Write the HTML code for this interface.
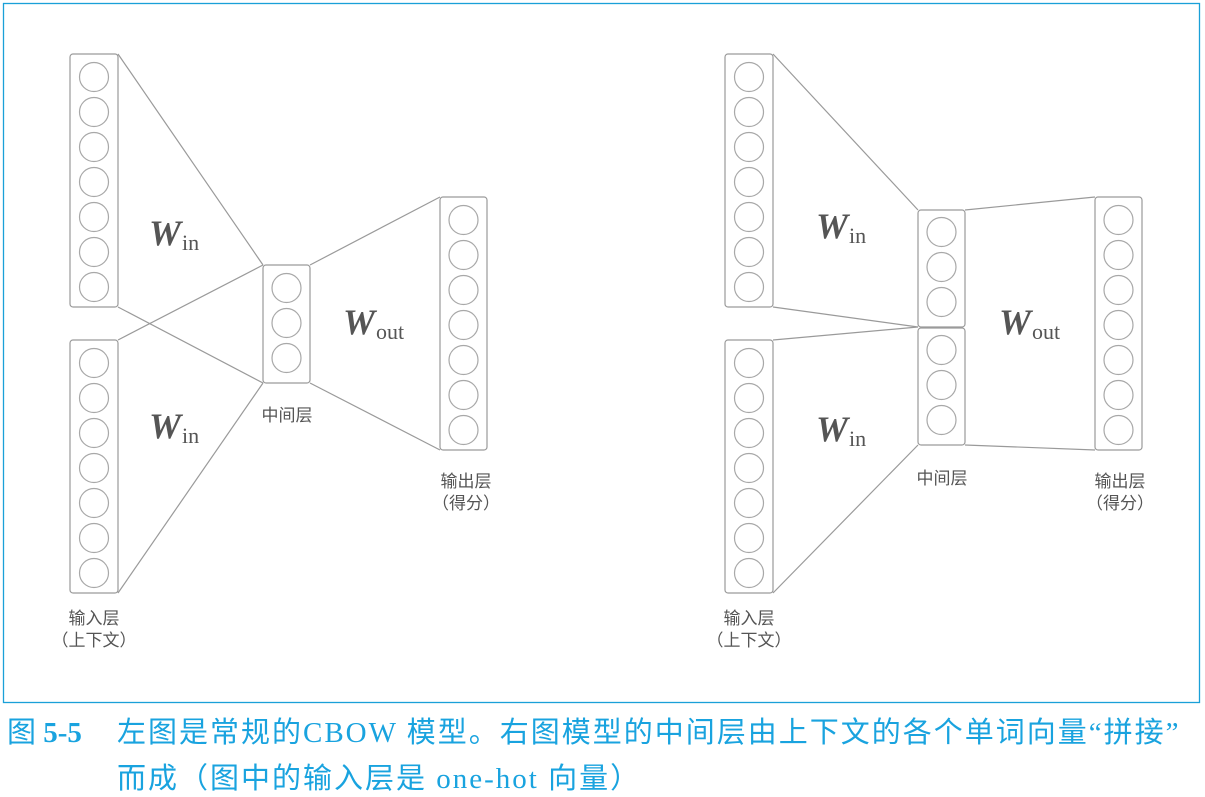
<!DOCTYPE html>
<html><head><meta charset="utf-8"><style>
html,body{margin:0;padding:0;background:#fff;width:1205px;height:791px;overflow:hidden}
.cap{position:absolute;color:#19a3df;font-family:"Liberation Serif","Noto Sans CJK SC",serif;font-size:29px;white-space:nowrap;letter-spacing:2px}
</style></head><body>
<svg width="1205" height="791" style="position:absolute;left:0;top:0" xmlns="http://www.w3.org/2000/svg">
<rect x="3.5" y="3.5" width="1196" height="699" fill="none" stroke="#1aa0d8" stroke-width="1.3"/>
<g fill="none" stroke="#9a9a9a" stroke-width="1.2">
<rect x="70" y="54" width="48" height="253" rx="3"/>
<rect x="70" y="340" width="48" height="253" rx="3"/>
<rect x="263" y="265" width="47" height="118" rx="3"/>
<rect x="440" y="197" width="47" height="253" rx="3"/>
<line x1="118" y1="54" x2="263" y2="265"/>
<line x1="118" y1="307" x2="263" y2="383"/>
<line x1="118" y1="340" x2="263" y2="265"/>
<line x1="118" y1="593" x2="263" y2="383"/>
<line x1="310" y1="265" x2="440" y2="197"/>
<line x1="310" y1="383" x2="440" y2="450"/>
<rect x="725" y="54" width="48" height="253" rx="3"/>
<rect x="725" y="340" width="48" height="253" rx="3"/>
<rect x="918" y="210" width="47" height="117" rx="3"/>
<rect x="918" y="328" width="47" height="117" rx="3"/>
<rect x="1095" y="197" width="47" height="253" rx="3"/>
<line x1="773" y1="54" x2="918" y2="210"/>
<line x1="773" y1="307" x2="918" y2="327"/>
<line x1="773" y1="340" x2="918" y2="327"/>
<line x1="773" y1="593" x2="918" y2="445"/>
<line x1="965" y1="210" x2="1095" y2="197"/>
<line x1="965" y1="445" x2="1095" y2="450"/>
</g>
<g fill="none" stroke="#a8a8a8" stroke-width="1.2">
<circle cx="94" cy="77" r="14.5"/><circle cx="94" cy="112" r="14.5"/><circle cx="94" cy="147" r="14.5"/><circle cx="94" cy="182" r="14.5"/><circle cx="94" cy="217" r="14.5"/><circle cx="94" cy="252" r="14.5"/><circle cx="94" cy="287" r="14.5"/>
<circle cx="94" cy="363" r="14.5"/><circle cx="94" cy="398" r="14.5"/><circle cx="94" cy="433" r="14.5"/><circle cx="94" cy="468" r="14.5"/><circle cx="94" cy="503" r="14.5"/><circle cx="94" cy="538" r="14.5"/><circle cx="94" cy="573" r="14.5"/>
<circle cx="286.5" cy="288" r="14.5"/><circle cx="286.5" cy="323" r="14.5"/><circle cx="286.5" cy="358" r="14.5"/>
<circle cx="463.5" cy="220" r="14.5"/><circle cx="463.5" cy="255" r="14.5"/><circle cx="463.5" cy="290" r="14.5"/><circle cx="463.5" cy="325" r="14.5"/><circle cx="463.5" cy="360" r="14.5"/><circle cx="463.5" cy="395" r="14.5"/><circle cx="463.5" cy="430" r="14.5"/>
<circle cx="749" cy="77" r="14.5"/><circle cx="749" cy="112" r="14.5"/><circle cx="749" cy="147" r="14.5"/><circle cx="749" cy="182" r="14.5"/><circle cx="749" cy="217" r="14.5"/><circle cx="749" cy="252" r="14.5"/><circle cx="749" cy="287" r="14.5"/>
<circle cx="749" cy="363" r="14.5"/><circle cx="749" cy="398" r="14.5"/><circle cx="749" cy="433" r="14.5"/><circle cx="749" cy="468" r="14.5"/><circle cx="749" cy="503" r="14.5"/><circle cx="749" cy="538" r="14.5"/><circle cx="749" cy="573" r="14.5"/>
<circle cx="941.5" cy="232" r="14.5"/><circle cx="941.5" cy="267" r="14.5"/><circle cx="941.5" cy="302" r="14.5"/>
<circle cx="941.5" cy="350" r="14.5"/><circle cx="941.5" cy="385" r="14.5"/><circle cx="941.5" cy="420" r="14.5"/>
<circle cx="1118.5" cy="220" r="14.5"/><circle cx="1118.5" cy="255" r="14.5"/><circle cx="1118.5" cy="290" r="14.5"/><circle cx="1118.5" cy="325" r="14.5"/><circle cx="1118.5" cy="360" r="14.5"/><circle cx="1118.5" cy="395" r="14.5"/><circle cx="1118.5" cy="430" r="14.5"/>
</g>
<g fill="#555" font-family="Liberation Serif,serif">
<text x="149" y="245" font-size="36" font-style="italic" font-weight="bold">W</text><text x="182" y="250" font-size="22">in</text>
<text x="149" y="438" font-size="36" font-style="italic" font-weight="bold">W</text><text x="182" y="443" font-size="22">in</text>
<text x="343" y="334" font-size="36" font-style="italic" font-weight="bold">W</text><text x="376" y="339" font-size="22">out</text>
<text x="816" y="238" font-size="36" font-style="italic" font-weight="bold">W</text><text x="849" y="243" font-size="22">in</text>
<text x="816" y="441" font-size="36" font-style="italic" font-weight="bold">W</text><text x="849" y="446" font-size="22">in</text>
<text x="999" y="334" font-size="36" font-style="italic" font-weight="bold">W</text><text x="1032" y="339" font-size="22">out</text>
</g>
<g fill="#555" font-family="Liberation Sans,Noto Sans CJK SC,sans-serif" font-size="17" text-anchor="middle">
<text x="287" y="421">中间层</text>
<text x="94" y="624">输入层</text><text x="94" y="646">（上下文）</text>
<text x="466" y="487">输出层</text><text x="466" y="509">（得分）</text>
<text x="942" y="484">中间层</text>
<text x="749" y="624">输入层</text><text x="749" y="646">（上下文）</text>
<text x="1120" y="487">输出层</text><text x="1120" y="509">（得分）</text>
</g>
</svg>
<div class="cap" style="left:7px;top:709px;letter-spacing:0">图 <b>5-5</b></div>
<div class="cap" style="left:117px;top:709px">左图是常规的CBOW 模型。右图模型的中间层由上下文的各个单词向量“拼接”</div>
<div class="cap" style="left:117px;top:755px">而成（图中的输入层是 one-hot 向量）</div>
</body></html>
